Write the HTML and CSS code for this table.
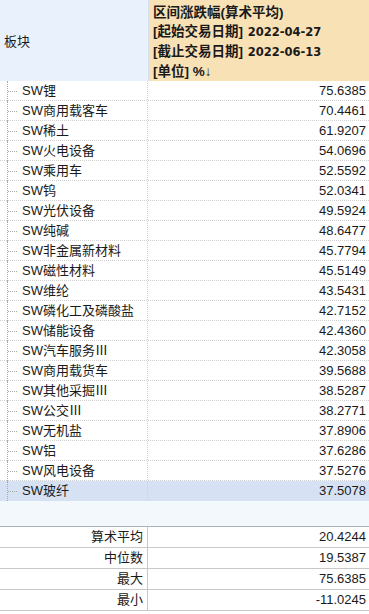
FILE: index.html
```html
<!DOCTYPE html>
<html>
<head>
<meta charset="utf-8">
<link rel="stylesheet" href="styles.css">
</head>
<body>
<div class="table">
  <div class="head">
    <div class="head-left">板块</div>
    <div class="head-right">
      <div>区间涨跌幅(算术平均)</div>
      <div>[起始交易日期] <span class="date">2022-04-27</span></div>
      <div>[截止交易日期] <span class="date">2022-06-13</span></div>
      <div>[单位] %↓</div>
    </div>
  </div>
  <div class="body">
    <div class="row"><div class="name"><span class="tree"></span>SW锂</div><div class="val">75.6385</div></div>
    <div class="row"><div class="name"><span class="tree"></span>SW商用载客车</div><div class="val">70.4461</div></div>
    <div class="row"><div class="name"><span class="tree"></span>SW稀土</div><div class="val">61.9207</div></div>
    <div class="row"><div class="name"><span class="tree"></span>SW火电设备</div><div class="val">54.0696</div></div>
    <div class="row"><div class="name"><span class="tree"></span>SW乘用车</div><div class="val">52.5592</div></div>
    <div class="row"><div class="name"><span class="tree"></span>SW钨</div><div class="val">52.0341</div></div>
    <div class="row"><div class="name"><span class="tree"></span>SW光伏设备</div><div class="val">49.5924</div></div>
    <div class="row"><div class="name"><span class="tree"></span>SW纯碱</div><div class="val">48.6477</div></div>
    <div class="row"><div class="name"><span class="tree"></span>SW非金属新材料</div><div class="val">45.7794</div></div>
    <div class="row"><div class="name"><span class="tree"></span>SW磁性材料</div><div class="val">45.5149</div></div>
    <div class="row"><div class="name"><span class="tree"></span>SW维纶</div><div class="val">43.5431</div></div>
    <div class="row"><div class="name"><span class="tree"></span>SW磷化工及磷酸盐</div><div class="val">42.7152</div></div>
    <div class="row"><div class="name"><span class="tree"></span>SW储能设备</div><div class="val">42.4360</div></div>
    <div class="row"><div class="name"><span class="tree"></span>SW汽车服务Ⅲ</div><div class="val">42.3058</div></div>
    <div class="row"><div class="name"><span class="tree"></span>SW商用载货车</div><div class="val">39.5688</div></div>
    <div class="row"><div class="name"><span class="tree"></span>SW其他采掘Ⅲ</div><div class="val">38.5287</div></div>
    <div class="row"><div class="name"><span class="tree"></span>SW公交Ⅲ</div><div class="val">38.2771</div></div>
    <div class="row"><div class="name"><span class="tree"></span>SW无机盐</div><div class="val">37.8906</div></div>
    <div class="row"><div class="name"><span class="tree"></span>SW铝</div><div class="val">37.6286</div></div>
    <div class="row"><div class="name"><span class="tree"></span>SW风电设备</div><div class="val">37.5276</div></div>
    <div class="row selected"><div class="name"><span class="tree"></span>SW玻纤</div><div class="val">37.5078</div></div>
  </div>
  <div class="gap"></div>
  <div class="stats">
    <div class="srow"><div class="slabel">算术平均</div><div class="sval">20.4244</div></div>
    <div class="srow"><div class="slabel">中位数</div><div class="sval">19.5387</div></div>
    <div class="srow"><div class="slabel">最大</div><div class="sval">75.6385</div></div>
    <div class="srow"><div class="slabel">最小</div><div class="sval">-11.0245</div></div>
  </div>
</div>
</body>
</html>
```
FILE: styles.css
```css
html, body {
  margin: 0;
  padding: 0;
  background: #ffffff;
}
body {
  font-family: "Liberation Sans", "Noto Sans CJK SC", sans-serif;
  font-size: 13px;
  color: #1a1a1a;
}
.table {
  width: 369px;
}
.head {
  display: grid;
  grid-template-columns: 149px 1fr;
  height: 80px;
  border-bottom: 1px solid #c3d3e6;
}
.head-left {
  background: #e9f2fc;
  border-right: 1px solid #d6e0ec;
  display: flex;
  align-items: center;
  padding-left: 4px;
}
.head-right {
  background: #f9e1b6;
  font-weight: bold;
  font-size: 13.5px;
  padding: 3px 0 0 4px;
  line-height: 19px;
  white-space: nowrap;
}
.date {
  font-family: "DejaVu Sans", sans-serif;
  font-size: 11.5px;
  margin-left: 1px;
}
.row {
  display: grid;
  grid-template-columns: 148px 1fr;
  height: 19px;
  border-bottom: 1px dotted #d0d0d0;
  line-height: 19px;
}
.row.selected {
  background: #d6e2f3;
  border-bottom-color: #d6e2f3;
}
.name {
  position: relative;
  padding-left: 22px;
  border-right: 1px dotted #d0d0d0;
  white-space: nowrap;
}
.tree {
  position: absolute;
  left: 7px;
  top: 0;
  bottom: -1px;
  width: 9px;
  border-left: 1px dotted #a8a8a8;
}
.tree::after {
  content: "";
  position: absolute;
  left: 0;
  top: 10px;
  width: 9px;
  border-top: 1px dotted #a8a8a8;
}
.val {
  text-align: right;
  padding-right: 3px;
}
.gap {
  height: 25px;
  background: #f3f8fd;
  border-bottom: 1px solid #a9b4c0;
}
.srow {
  display: grid;
  grid-template-columns: 148px 1fr;
  height: 20px;
  border-bottom: 1px solid #c8c8c8;
  line-height: 20px;
}
.slabel {
  text-align: right;
  padding-right: 4px;
  border-right: 1px solid #c8c8c8;
}
.sval {
  text-align: right;
  padding-right: 3px;
}
```
